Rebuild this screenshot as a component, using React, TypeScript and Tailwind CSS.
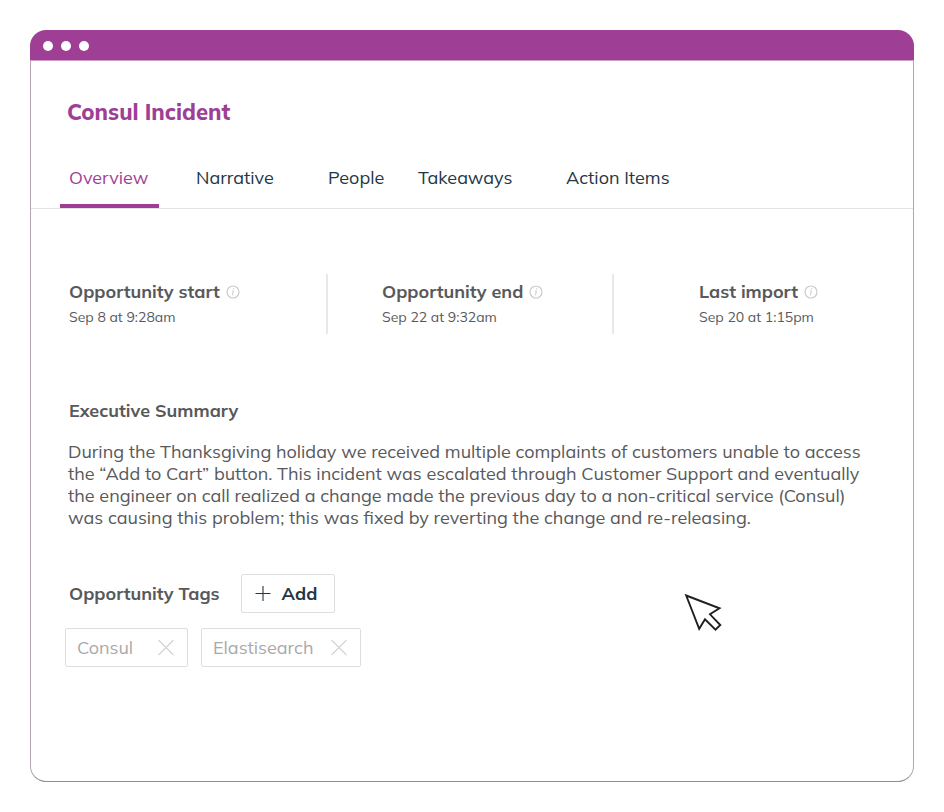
import { useState } from "react";

const tabs = ["Overview", "Narrative", "People", "Takeaways", "Action Items"];

const facts = [
  { label: "Opportunity start", value: "Sep 8 at 9:28am" },
  { label: "Opportunity end", value: "Sep 22 at 9:32am" },
  { label: "Last import", value: "Sep 20 at 1:15pm" },
];

const summary = [
  "During the Thanksgiving holiday we received multiple complaints of customers unable to access",
  "the “Add to Cart” button. This incident was escalated through Customer Support and eventually",
  "the engineer on call realized a change made the previous day to a non-critical service (Consul)",
  "was causing this problem; this was fixed by reverting the change and re-releasing.",
];

function InfoIcon() {
  return (
    <svg width="14" height="14" viewBox="0 0 14 14" fill="none" stroke="#cbcbcd" aria-hidden="true">
      <circle cx="7" cy="7" r="6" strokeWidth="1.2" />
      <path d="M6.200 6h1.100l-.8 4.300" strokeWidth="1" />
      <circle cx="7.600" cy="3.900" r=".7" fill="#cbcbcd" stroke="none" />
    </svg>
  );
}

function Tag({ name, onRemove }: { name: string; onRemove: () => void }) {
  return (
    <li className="flex h-[39px] min-w-[123px] items-center justify-between gap-4 rounded-xs border border-[#dedee0] pr-3 pl-[11px] text-lg text-[#a9a9ab]">
      {name}
      <button type="button" aria-label={`Remove ${name}`} onClick={onRemove}>
        <svg width="18" height="18" viewBox="0 0 18 18" fill="none" stroke="#d3d3d5" strokeWidth="1.1" className="block">
          <path d="M1.500 1l15 15M16.500 1l-15 15" />
        </svg>
      </button>
    </li>
  );
}

export default function App() {
  const [active, setActive] = useState("Overview");
  const [tags, setTags] = useState(["Consul", "Elastisearch"]);

  return (
    <div className="bg-white p-[30px] font-['Mulish','Muli','Lato',sans-serif] text-[#58595b]">
      <main className="relative">
        <div className="flex h-[31px] items-center gap-2 rounded-t-2xl border-b border-[#cf9fca] bg-[#9e3f95] pt-px pl-[13px]">
          <span className="size-[10px] rounded-full bg-white" />
          <span className="size-[10px] rounded-full bg-white" />
          <span className="size-[10px] rounded-full bg-white" />
        </div>

        <div className="rounded-b-2xl border-x border-b border-[#b0a5b1] border-b-[#8f8d90] pt-[35px] pb-[114px]">
          <h1 className="pl-9 text-[22px] leading-8 font-extrabold text-[#9e3f95]">Consul Incident</h1>

          <nav className="mt-9 grid grid-cols-[127px_132px_90px_148px_auto] border-b border-[#e3e3e5] pl-[29px]">
            {tabs.map((tab) => (
              <button
                key={tab}
                type="button"
                onClick={() => setActive(tab)}
                className={
                  tab === active
                    ? "h-11 justify-self-start border-b-4 border-[#9e3f95] pr-[11px] pb-3 pl-[9px] text-lg leading-6 text-[#9e3f95]"
                    : "h-11 justify-self-start border-b-4 border-transparent pr-[11px] pb-3 pl-[9px] text-lg leading-6 text-[#233746]"
                }
              >
                {tab}
              </button>
            ))}
          </nav>

          <dl className="mt-[65px] grid grid-cols-[297fr_286fr_299fr]">
            {facts.map((fact, i) => (
              <div
                key={fact.label}
                className={
                  i === 0
                    ? "h-[60px] border-r-2 border-[#e8e8ea] pt-1.5 pl-[38px]"
                    : i === 1
                      ? "h-[60px] border-r-2 border-[#e8e8ea] pt-1.5 pl-[54px]"
                      : "h-[60px] pt-1.5 pl-[85px]"
                }
              >
                <dt className="flex items-center gap-1.5 text-lg leading-6 font-bold">
                  {fact.label}
                  <InfoIcon />
                </dt>
                <dd className="text-sm leading-[26px]">{fact.value}</dd>
              </div>
            ))}
          </dl>

          <section className="mt-[63px] pl-[37px]">
            <h2 className="pl-px text-lg leading-7 font-bold">Executive Summary</h2>
            <p className="mt-4 text-lg leading-[22px]">
              {summary.map((line) => (
                <span key={line} className="block">
                  {line}
                </span>
              ))}
            </p>
          </section>

          <section className="mt-[45px] pl-[34px]">
            <div className="flex items-center gap-[21px] pl-1">
              <h2 className="text-lg leading-7 font-bold">Opportunity Tags</h2>
              <button
                type="button"
                onClick={() => setTags([...tags, "New tag"])}
                className="flex h-[39px] items-center gap-2.5 rounded-xs border border-[#dedee0] pr-[17px] pl-3 text-lg font-bold text-[#233746]"
              >
                <svg width="18" height="18" viewBox="0 0 18 18" fill="none" stroke="#233746" strokeWidth="1.1" aria-hidden="true">
                  <path d="M9 1v15M1.500 8.500h15" />
                </svg>
                Add
              </button>
            </div>
            <ul className="mt-[15px] flex gap-[13px]">
              {tags.map((tag, i) => (
                <Tag key={i} name={tag} onRemove={() => setTags(tags.filter((_, j) => j !== i))} />
              ))}
            </ul>
          </section>
        </div>

        <svg
          width="40"
          height="40"
          viewBox="0 0 40 40"
          fill="white"
          stroke="#231f20"
          strokeWidth="1.9"
          className="absolute top-[562px] left-[652px]"
          aria-hidden="true"
        >
          <path d="M4.200 3.500L37.500 16.300L28 22.300L38.300 33L33.500 37.600L23 27.300L17.200 36.800Z" />
        </svg>
      </main>
    </div>
  );
}
